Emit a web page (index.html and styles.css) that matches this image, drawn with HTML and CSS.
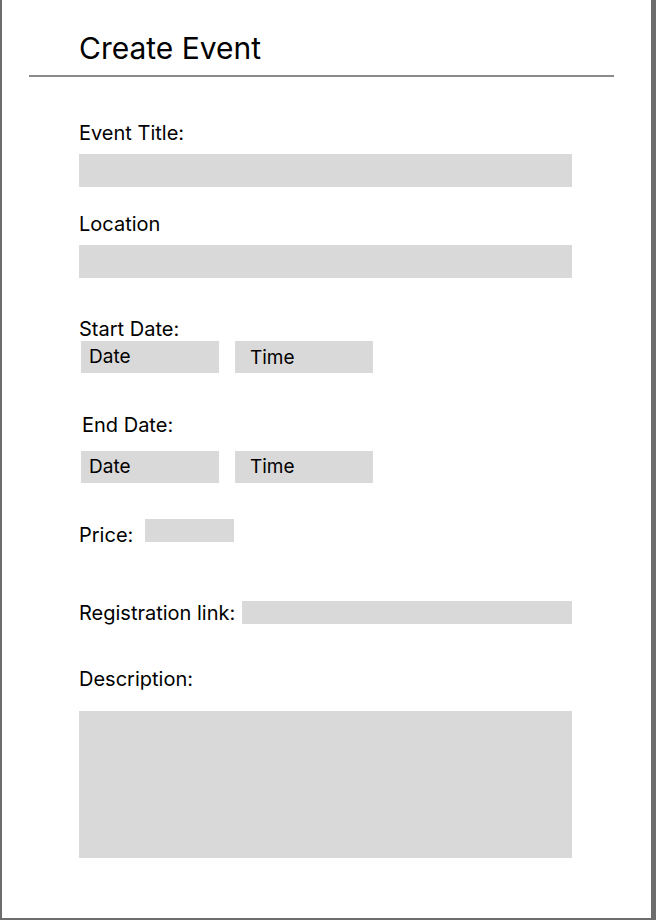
FILE: index.html
```html
<!DOCTYPE html>
<html>
<head>
<meta charset="utf-8">
<link rel="stylesheet" href="styles.css">
<title>Create Event</title>
</head>
<body>
<div class="frame">
  <h1 class="title">Create Event</h1>
  <div class="divider"></div>
  <form class="form">
    <label class="label l-title">Event Title:</label>
    <div class="field field-wide f-title"></div>

    <label class="label l-location">Location</label>
    <div class="field field-wide f-location"></div>

    <label class="label l-start">Start Date:</label>
    <div class="dt-row r-start">
      <div class="field box box-date">Date</div>
      <div class="field box box-time t-start">Time</div>
    </div>

    <label class="label l-end">End Date:</label>
    <div class="dt-row r-end">
      <div class="field box box-date">Date</div>
      <div class="field box box-time">Time</div>
    </div>

    <div class="inline-row r-price">
      <label class="label lab-price">Price:</label>
      <div class="field f-price"></div>
    </div>

    <div class="inline-row r-link">
      <label class="label lab-link">Registration link:</label>
      <div class="field f-link"></div>
    </div>

    <label class="label l-desc">Description:</label>
    <div class="field f-desc"></div>
  </form>
</div>
</body>
</html>
```

FILE: styles.css
```css
html, body {
  margin: 0;
  padding: 0;
  background: #ffffff;
}

body {
  font-family: Inter, "Noto Sans", sans-serif;
  color: #000000;
}

.frame {
  width: 656px;
  height: 920px;
  box-sizing: border-box;
  border-left: 2px solid #6d6d6d;
  border-right: 5px solid #6d6d6d;
  border-bottom: 2px solid #6d6d6d;
  background: #ffffff;
  display: flex;
  flex-direction: column;
}

.title {
  margin: 30px 0 0 77px;
  font-size: 30px;
  line-height: 36px;
  font-weight: 400;
}

.divider {
  margin: 9px 0 0 27px;
  width: 585px;
  height: 2px;
  background: #8a8a8a;
}

.form {
  display: flex;
  flex-direction: column;
  align-items: flex-start;
  padding-left: 77px;
}

.label {
  font-size: 20px;
  line-height: 24px;
  display: block;
}

.field {
  background: #d9d9d9;
}

.field-wide {
  width: 493px;
  height: 33px;
  margin-top: 9px;
}

.l-title { margin-top: 44px; }
.l-location { margin-top: 25px; }
.l-start { margin-top: 39px; }
.l-end { margin-top: 40px; margin-left: 3px; }
.l-desc { margin-top: 42px; }

.dt-row {
  display: flex;
  gap: 16px;
  margin-left: 2px;
}

.r-end { margin-top: 14px; }

.box {
  width: 138px;
  height: 32px;
  box-sizing: border-box;
  font-size: 19px;
  line-height: 32px;
}

.box-date { padding-left: 8px; }
.box-time { padding-left: 15px; }
.t-start { line-height: 34px; }

.inline-row {
  display: flex;
  align-items: flex-start;
}

.r-price { margin-top: 36px; }
.lab-price { width: 66px; margin-top: 4px; }
.f-price { width: 89px; height: 23px; }

.r-link { margin-top: 54px; }
.lab-link { width: 163px; }
.f-link { width: 330px; height: 23px; }

.f-desc {
  width: 493px;
  height: 147px;
  margin-top: 20px;
}
```
